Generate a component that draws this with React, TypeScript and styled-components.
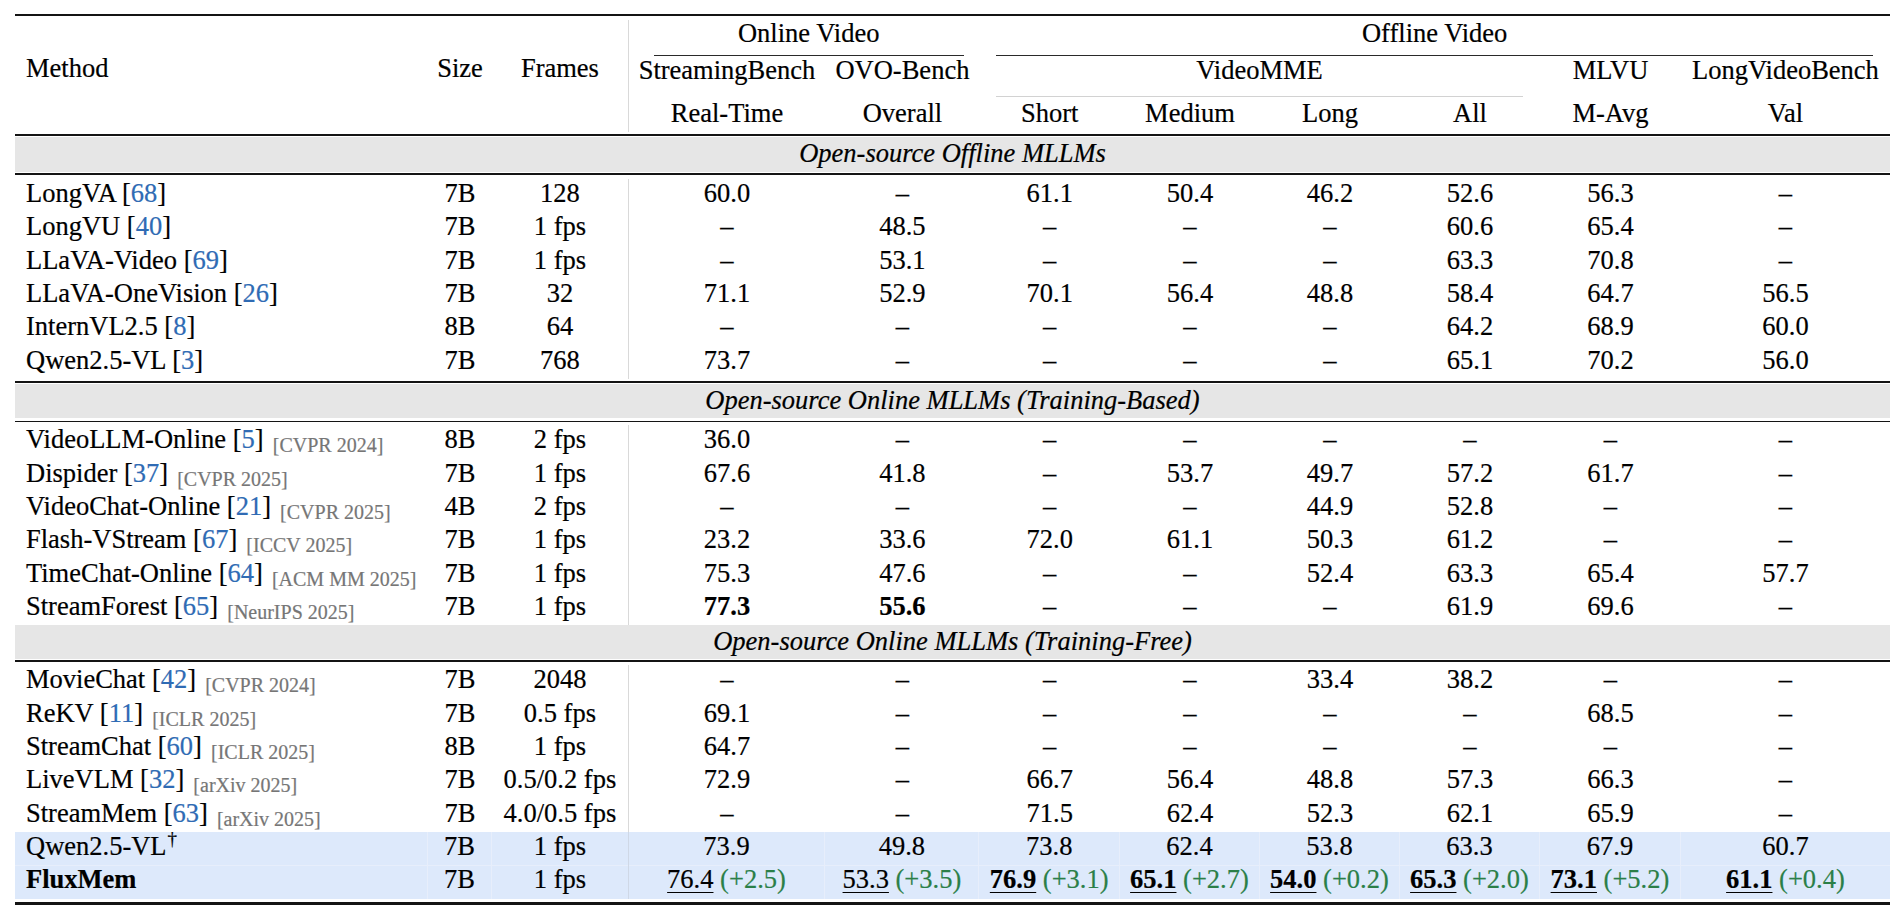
import React from "react";
import styled, { createGlobalStyle, css } from "styled-components";

const COLS =
  "412.7px 64.6px 136.3px 196.8px 154.1px 140.5px 140px 140px 140px 141px 209px";

const GlobalStyle = createGlobalStyle`
  html, body { margin: 0; padding: 0; background: #ffffff; }
  body {
    font-family: "Liberation Serif", "Times New Roman", serif;
    color: #000000;
  }
`;

const Page = styled.main`
  padding: 14px 0 0 15px;
`;

const Table = styled.section`
  width: 1875px;
  display: flex;
  flex-direction: column;
  font-size: 26.5px;
  line-height: 28.5px;
  -webkit-text-stroke: 0.2px currentColor;
`;

const Rule = styled.div<{ $h: number; $mt?: number }>`
  height: ${(p) => p.$h}px;
  margin-top: ${(p) => p.$mt ?? 0}px;
  background: #141414;
  flex: none;
`;

const HeadGrid = styled.div`
  display: grid;
  grid-template-columns: ${COLS};
  grid-template-rows: 40px 40.7px 37.3px;
  height: 118px;
`;

const HeadCell = styled.div<{
  $col: string;
  $row: string;
  $l?: number;
  $r?: number;
  $pt?: number;
  $line?: "dark" | "light";
  $left?: boolean;
  $divider?: boolean;
}>`
  grid-column: ${(p) => p.$col};
  grid-row: ${(p) => p.$row};
  margin: 0 ${(p) => p.$r ?? 0}px 0 ${(p) => p.$l ?? 0}px;
  padding-top: ${(p) => p.$pt ?? 0}px;
  box-sizing: border-box;
  white-space: nowrap;
  text-align: ${(p) => (p.$left ? "left" : "center")};
  ${(p) => p.$left && css`padding-left: 11px;`}
  ${(p) =>
    p.$line &&
    css`
      border-bottom: 1px solid ${p.$line === "dark" ? "#2a2a2a" : "#d2d2d2"};
    `}
  ${(p) =>
    p.$divider &&
    css`
      margin-top: 4px;
      margin-bottom: 2px;
      border-right: 1px solid #d9d9d9;
    `}
`;

const Band = styled.div<{ $mt?: number; $h: number }>`
  margin-top: ${(p) => p.$mt ?? 0}px;
  height: ${(p) => p.$h}px;
  box-sizing: border-box;
  padding-top: 2px;
  background: #e6e6e6;
  font-style: italic;
  text-align: center;
  white-space: nowrap;
`;

const Section = styled.div<{ $pt: number; $pb: number }>`
  padding: ${(p) => p.$pt}px 0 ${(p) => p.$pb}px;
  display: flex;
  flex-direction: column;
`;

const Row = styled.div<{ $tint?: boolean; $seam?: boolean }>`
  display: grid;
  grid-template-columns: ${COLS};
  height: 33.333px;
  background: ${(p) => (p.$tint ? "#dde9fb" : "transparent")};
  ${(p) => p.$seam && css`box-shadow: inset 0 1px 0 #e7eefb;`}
`;

const Cell = styled.div<{ $first?: boolean; $divider?: boolean; $tint?: boolean; $last?: boolean }>`
  box-sizing: border-box;
  white-space: nowrap;
  text-align: center;
  ${(p) => p.$first && css`text-align: left; padding-left: 11px;`}
  ${(p) => p.$tint && !p.$last && css`border-right: 1px solid #e7eefb;`}
  ${(p) =>
    p.$divider &&
    css`
      border-right: 1px solid ${p.$tint ? "#cfd8e6" : "#d9d9d9"};
    `}
`;

const Cite = styled.span`
  color: #2f6bb4;
`;

const Venue = styled.span`
  font-size: 20px;
  line-height: 1;
  color: #767676;
  vertical-align: -4px;
  margin-left: 2.5px;
`;

const Dagger = styled.sup`
  font-size: 19px;
  line-height: 0;
  vertical-align: 10px;
  margin-left: 1px;
`;

const Bold = styled.span`
  font-weight: 700;
`;

const Num = styled.span<{ $b?: boolean; $u?: boolean }>`
  font-weight: ${(p) => (p.$b ? 700 : 400)};
  ${(p) =>
    p.$u &&
    css`
      text-decoration: underline;
      text-decoration-thickness: 1.3px;
      text-underline-offset: 4px;
    `}
`;

const Gain = styled.span`
  color: #2b7f48;
`;

type Val = string | { v: string; b?: boolean; u?: boolean; gain?: string };

type Method = { name: string; cite?: string; venue?: string; dagger?: boolean; bold?: boolean };

type DataRow = { m: Method; size: string; frames: string; v: Val[]; tint?: boolean; seam?: boolean };

const D = "–";

const S1: DataRow[] = [
  { m: { name: "LongVA", cite: "68" }, size: "7B", frames: "128", v: ["60.0", D, "61.1", "50.4", "46.2", "52.6", "56.3", D] },
  { m: { name: "LongVU", cite: "40" }, size: "7B", frames: "1 fps", v: [D, "48.5", D, D, D, "60.6", "65.4", D] },
  { m: { name: "LLaVA-Video", cite: "69" }, size: "7B", frames: "1 fps", v: [D, "53.1", D, D, D, "63.3", "70.8", D] },
  { m: { name: "LLaVA-OneVision", cite: "26" }, size: "7B", frames: "32", v: ["71.1", "52.9", "70.1", "56.4", "48.8", "58.4", "64.7", "56.5"] },
  { m: { name: "InternVL2.5", cite: "8" }, size: "8B", frames: "64", v: [D, D, D, D, D, "64.2", "68.9", "60.0"] },
  { m: { name: "Qwen2.5-VL", cite: "3" }, size: "7B", frames: "768", v: ["73.7", D, D, D, D, "65.1", "70.2", "56.0"] },
];

const S2: DataRow[] = [
  { m: { name: "VideoLLM-Online", cite: "5", venue: "[CVPR 2024]" }, size: "8B", frames: "2 fps", v: ["36.0", D, D, D, D, D, D, D] },
  { m: { name: "Dispider", cite: "37", venue: "[CVPR 2025]" }, size: "7B", frames: "1 fps", v: ["67.6", "41.8", D, "53.7", "49.7", "57.2", "61.7", D] },
  { m: { name: "VideoChat-Online", cite: "21", venue: "[CVPR 2025]" }, size: "4B", frames: "2 fps", v: [D, D, D, D, "44.9", "52.8", D, D] },
  { m: { name: "Flash-VStream", cite: "67", venue: "[ICCV 2025]" }, size: "7B", frames: "1 fps", v: ["23.2", "33.6", "72.0", "61.1", "50.3", "61.2", D, D] },
  { m: { name: "TimeChat-Online", cite: "64", venue: "[ACM MM 2025]" }, size: "7B", frames: "1 fps", v: ["75.3", "47.6", D, D, "52.4", "63.3", "65.4", "57.7"] },
  { m: { name: "StreamForest", cite: "65", venue: "[NeurIPS 2025]" }, size: "7B", frames: "1 fps", v: [{ v: "77.3", b: true }, { v: "55.6", b: true }, D, D, D, "61.9", "69.6", D] },
];

const S3: DataRow[] = [
  { m: { name: "MovieChat", cite: "42", venue: "[CVPR 2024]" }, size: "7B", frames: "2048", v: [D, D, D, D, "33.4", "38.2", D, D] },
  { m: { name: "ReKV", cite: "11", venue: "[ICLR 2025]" }, size: "7B", frames: "0.5 fps", v: ["69.1", D, D, D, D, D, "68.5", D] },
  { m: { name: "StreamChat", cite: "60", venue: "[ICLR 2025]" }, size: "8B", frames: "1 fps", v: ["64.7", D, D, D, D, D, D, D] },
  { m: { name: "LiveVLM", cite: "32", venue: "[arXiv 2025]" }, size: "7B", frames: "0.5/0.2 fps", v: ["72.9", D, "66.7", "56.4", "48.8", "57.3", "66.3", D] },
  { m: { name: "StreamMem", cite: "63", venue: "[arXiv 2025]" }, size: "7B", frames: "4.0/0.5 fps", v: [D, D, "71.5", "62.4", "52.3", "62.1", "65.9", D] },
  { m: { name: "Qwen2.5-VL", dagger: true }, size: "7B", frames: "1 fps", tint: true, v: ["73.9", "49.8", "73.8", "62.4", "53.8", "63.3", "67.9", "60.7"] },
  {
    m: { name: "FluxMem", bold: true },
    size: "7B",
    frames: "1 fps",
    tint: true,
    seam: true,
    v: [
      { v: "76.4", u: true, gain: "(+2.5)" },
      { v: "53.3", u: true, gain: "(+3.5)" },
      { v: "76.9", b: true, u: true, gain: "(+3.1)" },
      { v: "65.1", b: true, u: true, gain: "(+2.7)" },
      { v: "54.0", b: true, u: true, gain: "(+0.2)" },
      { v: "65.3", b: true, u: true, gain: "(+2.0)" },
      { v: "73.1", b: true, u: true, gain: "(+5.2)" },
      { v: "61.1", b: true, u: true, gain: "(+0.4)" },
    ],
  },
];

function MethodText({ m }: { m: Method }) {
  return (
    <>
      {m.bold ? <Bold>{m.name}</Bold> : m.name}
      {m.dagger && <Dagger>†</Dagger>}
      {m.cite && (
        <>
          {" ["}
          <Cite>{m.cite}</Cite>
          {"]"}
        </>
      )}
      {m.venue && (
        <>
          {" "}
          <Venue>{m.venue}</Venue>
        </>
      )}
    </>
  );
}

function Value({ v }: { v: Val }) {
  if (typeof v === "string") return <>{v}</>;
  return (
    <>
      <Num $b={v.b} $u={v.u}>
        {v.v}
      </Num>
      {v.gain && (
        <>
          {" "}
          <Gain>{v.gain}</Gain>
        </>
      )}
    </>
  );
}

function DataRows({ rows }: { rows: DataRow[] }) {
  return (
    <>
      {rows.map((r, i) => (
        <Row key={i} $tint={r.tint} $seam={r.seam}>
          <Cell $first $tint={r.tint}>
            <MethodText m={r.m} />
          </Cell>
          <Cell $tint={r.tint}>{r.size}</Cell>
          <Cell $divider $tint={r.tint}>
            {r.frames}
          </Cell>
          {r.v.map((v, j) => (
            <Cell key={j} $tint={r.tint} $last={j === r.v.length - 1}>
              <Value v={v} />
            </Cell>
          ))}
        </Row>
      ))}
    </>
  );
}

function Header() {
  return (
    <HeadGrid>
      <HeadCell $col="1" $row="1 / 4" $left $pt={37.9}>
        Method
      </HeadCell>
      <HeadCell $col="2" $row="1 / 4" $pt={37.9}>
        Size
      </HeadCell>
      <HeadCell $col="3" $row="1 / 4" $pt={33.9} $divider>
        Frames
      </HeadCell>

      <HeadCell $col="4 / 6" $row="1" $l={25} $r={15.7} $pt={2.9} $line="dark">
        Online Video
      </HeadCell>
      <HeadCell $col="6 / 12" $row="1" $l={16.5} $r={16.6} $pt={2.9} $line="dark">
        Offline Video
      </HeadCell>

      <HeadCell $col="4" $row="2">StreamingBench</HeadCell>
      <HeadCell $col="5" $row="2">OVO-Bench</HeadCell>
      <HeadCell $col="6 / 10" $row="2" $l={16.5} $r={17} $line="light">
        VideoMME
      </HeadCell>
      <HeadCell $col="10" $row="2">MLVU</HeadCell>
      <HeadCell $col="11" $row="2">LongVideoBench</HeadCell>

      <HeadCell $col="4" $row="3" $pt={1.9}>Real-Time</HeadCell>
      <HeadCell $col="5" $row="3" $pt={1.9}>Overall</HeadCell>
      <HeadCell $col="6" $row="3" $pt={1.9}>Short</HeadCell>
      <HeadCell $col="7" $row="3" $pt={1.9}>Medium</HeadCell>
      <HeadCell $col="8" $row="3" $pt={1.9}>Long</HeadCell>
      <HeadCell $col="9" $row="3" $pt={1.9}>All</HeadCell>
      <HeadCell $col="10" $row="3" $pt={1.9}>M-Avg</HeadCell>
      <HeadCell $col="11" $row="3" $pt={1.9}>Val</HeadCell>
    </HeadGrid>
  );
}

export default function App() {
  return (
    <>
      <GlobalStyle />
      <Page>
        <Table>
          <Rule $h={2} />
          <Header />
          <Rule $h={2} />
          <Band $mt={1.3} $h={34.4}>Open-source Offline MLLMs</Band>
          <Rule $h={1.7} $mt={1.6} />
          <Section $pt={3.9} $pb={2}>
            <DataRows rows={S1} />
          </Section>
          <Rule $h={1.7} />
          <Band $mt={1.4} $h={34.3}>Open-source Online MLLMs (Training-Based)</Band>
          <Rule $h={1.7} $mt={2.6} />
          <Section $pt={3} $pb={0}>
            <DataRows rows={S2} />
          </Section>
          <Band $h={34}>Open-source Online MLLMs (Training-Free)</Band>
          <Rule $h={1.7} $mt={0.9} />
          <Section $pt={3.4} $pb={2.8}>
            <DataRows rows={S3} />
          </Section>
          <Rule $h={3} />
        </Table>
      </Page>
    </>
  );
}
